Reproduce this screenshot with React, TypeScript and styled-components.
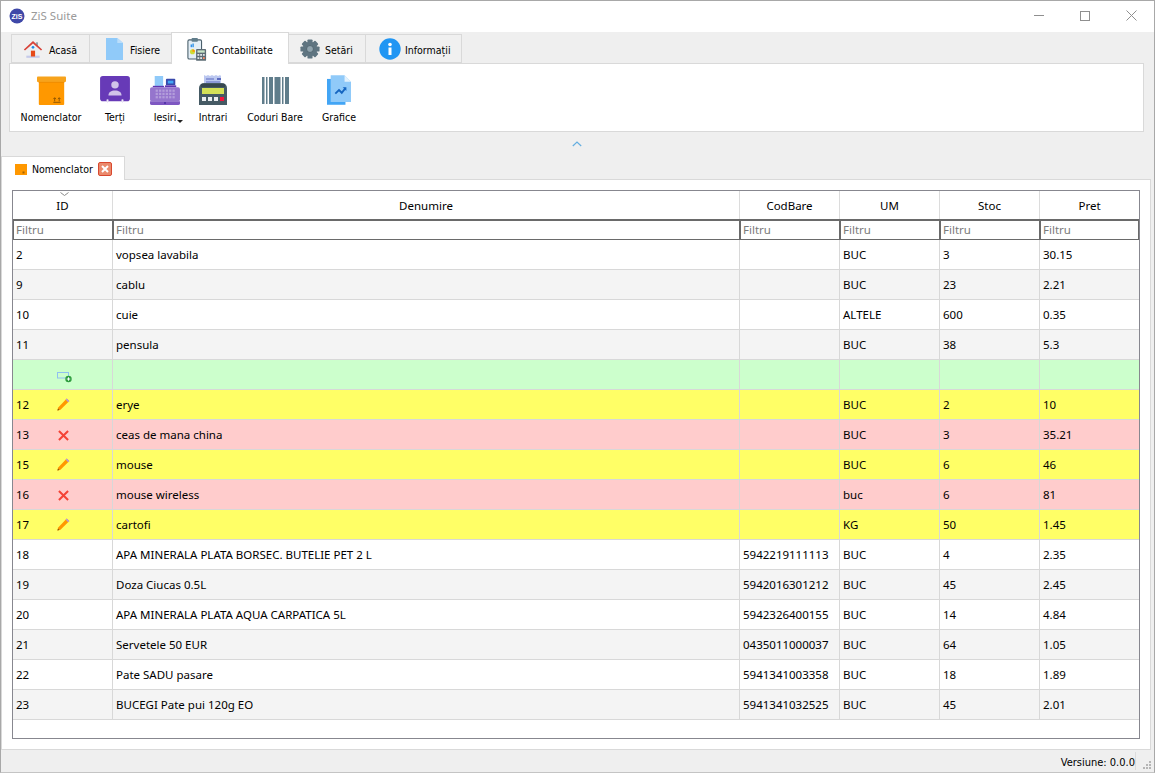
import React from "react";
import styled, { createGlobalStyle } from "styled-components";

const uiFont = `"DejaVu Sans Condensed", "DejaVu Sans", "Liberation Sans", sans-serif`;

const Global = createGlobalStyle`
  html, body { margin: 0; padding: 0; background: #efefef; }
  * { box-sizing: border-box; }
  body { font-family: "Noto Sans", "Open Sans", sans-serif; font-size: 11.5px; color: #000; }
`;

const Win = styled.div`
  width: 1155px; height: 773px; display: flex; flex-direction: column;
  background: #efefef; border: 1px solid #a8a8a8; border-bottom-color: #c4c4c4; overflow: hidden;
`;
const TitleBar = styled.div`
  height: 31px; flex: none; background: #fff; display: flex; align-items: center; padding: 0 0 2px 8px;
`;
const TitleText = styled.span`
  margin-left: 6px; color: #9a9a9a; font-size: 11.5px; flex: 1;
`;
const WinBtn = styled.div`
  width: 46px; height: 29px; display: flex; align-items: center; justify-content: center;
`;
const TabStrip = styled.div`
  display: flex; align-items: flex-end; height: 32px; flex: none; padding-left: 10px; position: relative; z-index: 1; margin-bottom: -1px;
  font-family: ${uiFont}; font-size: 10.5px;
`;
const Tab = styled.div<{ $w: number; $gap: number; $pad: number; $active?: boolean }>`
  width: ${p => p.$w}px; height: ${p => (p.$active ? 32 : 29)}px; display: flex; align-items: center; gap: ${p => p.$gap}px;
  padding-left: ${p => p.$pad}px; margin-bottom: ${p => (p.$active ? 0 : 1)}px;
  background: ${p => (p.$active ? "#fff" : "#f0f0f0")}; border: 1px solid #d9d9d9;
  border-bottom: ${p => (p.$active ? "none" : "1px solid #d9d9d9")}; margin-right: -1px; position: relative;
`;
const TabLabel = styled.span`
  padding-top: 3px; white-space: nowrap;
`;
const Ribbon = styled.div`
  height: 69px; flex: none; margin: 0 10px 0 8px; background: #fff; border: 1px solid #d9d9d9; display: flex; padding: 0 2px;
  font-family: ${uiFont}; font-size: 10.5px;
`;
const ToolBtn = styled.div<{ $w: number }>`
  width: ${p => p.$w}px; display: flex; flex-direction: column; align-items: center; padding-top: 11px;
`;
const ToolIconSlot = styled.div`
  height: 30px; display: flex; align-items: center; justify-content: center;
`;
const ToolLabel = styled.span`
  margin-top: 4px; line-height: 16px; white-space: nowrap; position: relative;
`;
const MenuCaret = styled.span`
  position: absolute; right: -7px; bottom: 2px; width: 0; height: 0;
  border-left: 3px solid transparent; border-right: 3px solid transparent; border-top: 3px solid #222;
`;
const Collapse = styled.div`
  height: 24px; flex: none; display: flex; justify-content: center; align-items: center; padding-right: 2px;
`;
const DocTabs = styled.div`
  height: 24px; flex: none; display: flex; position: relative; z-index: 1; margin-bottom: -1px;
  font-family: ${uiFont}; font-size: 10.5px;
`;
const DocTab = styled.div`
  width: 124px; height: 24px; background: #fff; border: 1px solid #d9d9d9; border-bottom: none;
  display: flex; align-items: center; padding: 1px 0 0 13px; gap: 5px;
`;
const DocPanel = styled.div`
  flex: 1; min-height: 0; margin: 0 3px 0 0; background: #fff; border: 1px solid #d9d9d9; padding: 10px 8px 10px 10px;
`;
const Table = styled.div`
  height: 549px; width: 1128px; border: 1px solid #87878f; display: flex; flex-direction: column;
`;
const cols = "100px 627px 100px 100px 100px 99px";
const HeadRow = styled.div`
  display: grid; grid-template-columns: ${cols}; height: 28px; flex: none;
`;
const HeadCell = styled.div`
  display: flex; align-items: center; justify-content: center; position: relative; border-right: 1px solid #dcdcdc; padding-top: 1px;
  &:last-child { border-right: none; }
`;
const SortMark = styled.svg`
  position: absolute; top: 1px; left: 47px;
`;
const FilterRow = styled.div`
  display: grid; grid-template-columns: ${cols}; height: 21px; flex: none;
`;
const Filter = styled.div`
  border: 1px solid #6a6a6a; border-top-width: 2px; color: #7b7b7b; display: flex; align-items: center; padding-left: 2px; line-height: 16px;
`;
const Row = styled.div<{ $bg: string }>`
  display: grid; grid-template-columns: ${cols}; height: 30px; flex: none; background: ${p => p.$bg}; border-bottom: 1px solid #d8d8d8;
`;
const Cell = styled.div`
  display: flex; align-items: center; padding-left: 3px; border-right: 1px solid #d8d8d8; position: relative; white-space: nowrap;
  &:last-child { border-right: none; }
`;
const RowIcon = styled.svg<{ $l: number; $t: number }>`
  position: absolute; left: ${p => p.$l}px; top: ${p => p.$t}px;
`;
const Status = styled.div`
  height: 22px; flex: none; display: flex; align-items: center; justify-content: flex-end; position: relative; padding: 0 18px 0 0;
  font-family: ${uiFont}; font-size: 11px;
`;
const StatusLabel = styled.span`
  padding: 2px 0 0; height: 18px; line-height: 18px; border-right: 1px solid #dcdcdc;
`;
const Grip = styled.svg`
  position: absolute; right: 1px; bottom: 1px;
`;

const ZisLogo = () => (
  <svg width="16" height="16" viewBox="0 0 16 16"><circle cx="8" cy="8" r="7.5" fill="#3f48a8" />
    <text x="8" y="10.5" textAnchor="middle" fontSize="7" fontWeight="700" fill="#fff" fontFamily="Liberation Sans, sans-serif">ZiS</text></svg>
);
const HomeIcon = () => (
  <svg width="20" height="20" viewBox="0 0 24 24">
    <path d="M5 11 12 5l7 6v9H5z" fill="#eceff1" />
    <rect x="4" y="20" width="16" height="2.6" fill="#c5cae9" />
    <rect x="15.5" y="4" width="2.5" height="4.5" fill="#90a4ae" />
    <path d="M1 12.5 12 2.5l11 10-1.4 1.4L12 5.4 2.4 13.9z" fill="#d84339" />
    <circle cx="12" cy="10" r="1.6" fill="#1e88e5" />
    <rect x="9.5" y="14" width="5" height="7" fill="#e64a19" />
  </svg>
);
const FileIcon = () => (
  <svg width="17" height="22" viewBox="0 0 18 26" preserveAspectRatio="none"><path d="M0 0h12l6 6v20H0z" fill="#90caf9" /><path d="M12 0l6 6h-6z" fill="#bbdefb" /></svg>
);
const AccountIcon = () => (
  <svg width="20" height="24" viewBox="0 0 22 26">
    <rect x="1" y="3" width="15" height="21" rx="1.5" fill="#e3eef6" stroke="#4a5f6b" strokeWidth="1.2" />
    <rect x="5" y="1" width="7" height="4" rx="1" fill="#607d8b" />
    <rect x="4" y="8" width="1.4" height="3" fill="#1e88e5" /><rect x="6" y="7" width="1.4" height="4" fill="#1e88e5" />
    <circle cx="6" cy="16" r="2.8" fill="#cddc39" /><path d="M6 16V13.2A2.8 2.8 0 0 1 8.8 16z" fill="#ff9800" />
    <rect x="10" y="13" width="11" height="13" rx="1" fill="#5d6c75" />
    <rect x="11.5" y="14.5" width="8" height="2.5" fill="#c8e6c9" />
    <g fill="#dfe5e8"><rect x="11.5" y="18.5" width="2" height="2" /><rect x="14.5" y="18.5" width="2" height="2" /><rect x="17.5" y="18.5" width="2" height="2" /><rect x="11.5" y="22" width="2" height="2" /><rect x="14.5" y="22" width="2" height="2" /></g>
    <rect x="17.5" y="22" width="2" height="2" fill="#ff8a65" />
  </svg>
);
const GearIcon = () => (
  <svg width="20" height="20" viewBox="0 0 22 22">
    <g fill="#5f7581">
      {[0, 45, 90, 135].map(a => <rect key={a} x="8.2" y="0.5" width="5.6" height="21" rx="1" transform={`rotate(${a} 11 11)`} />)}
      <circle cx="11" cy="11" r="8" />
    </g>
    <circle cx="11" cy="11" r="3.8" fill="#90a4ae" />
    <circle cx="11" cy="11" r="3.8" fill="none" stroke="#465a64" strokeWidth="0.8" />
  </svg>
);
const InfoIcon = () => (
  <svg width="22" height="22" viewBox="0 0 22 22"><circle cx="11" cy="11" r="10.7" fill="#2196f3" />
    <rect x="9.5" y="9.5" width="3" height="7.5" fill="#fff" /><circle cx="11" cy="6.5" r="1.8" fill="#fff" /></svg>
);
const BoxIcon = () => (
  <svg width="29" height="29" viewBox="0 0 32 32">
    <rect x="2" y="6" width="28" height="26" rx="1" fill="#ff9800" />
    <rect x="0" y="0.5" width="32" height="6" rx="1" fill="#f7a31c" /><rect x="2" y="6.5" width="28" height="1" fill="#ef8c00" />
    <path d="M19.5 24v4M18 25.5l1.5-1.5 1.5 1.5M24.5 24v4M23 25.5l1.5-1.5 1.5 1.5" stroke="#8a5200" strokeWidth="1" fill="none" />
    <rect x="18" y="28.5" width="8" height="1" fill="#8a5200" />
  </svg>
);
const DocBoxIcon = () => (
  <svg width="12" height="11" viewBox="0 0 12 11"><rect width="12" height="11" fill="#ff9800" /><rect x="7.5" y="7.5" width="2" height="2" fill="#a86400" /></svg>
);
const ContactIcon = () => (
  <svg width="30" height="28" viewBox="0 0 32 30">
    <rect x="0" y="0" width="32" height="27" rx="3" fill="#673ab7" />
    <circle cx="16" cy="9.5" r="4" fill="#d1c4e9" /><path d="M9 21c0-4 3-5.5 7-5.5s7 1.5 7 5.5z" fill="#d1c4e9" />
    <circle cx="8" cy="26" r="1.2" fill="#ede7f6" /><circle cx="24" cy="26" r="1.2" fill="#ede7f6" />
    <rect x="7.5" y="26" width="1" height="3" fill="#ede7f6" /><rect x="23.5" y="26" width="1" height="3" fill="#ede7f6" />
  </svg>
);
const RegisterIcon = () => (
  <svg width="30" height="29" viewBox="0 0 32 31">
    <rect x="5" y="0" width="9" height="12" fill="#90caf9" /><rect x="17" y="3" width="10" height="7" rx="1" fill="#3949ab" /><rect x="19" y="5" width="6" height="3" fill="#42a5f5" />
    <rect x="3" y="10.5" width="12" height="1.6" fill="#5e35b1" /><rect x="16" y="10" width="12" height="2" fill="#5e35b1" />
    <rect x="0" y="12" width="32" height="15" rx="2" fill="#9575cd" /><path d="M0 27h32v2a2 2 0 0 1-2 2H2a2 2 0 0 1-2-2z" fill="#7e57c2" />
    <g fill="#b39ddb">{[0, 1, 2, 3, 4, 5].map(i => [0, 1, 2].map(j => <rect key={`${i}${j}`} x={6 + i * 3.6} y={14.5 + j * 3.5} width="2.4" height="2.4" />))}</g>
    <circle cx="16" cy="28.8" r="1" fill="#4527a0" />
  </svg>
);
const PosIcon = () => (
  <svg width="28" height="30" viewBox="2 1 28 30">
    <path d="M7 1l2 1 2-1 2 1 2-1 2 1 2-1 2 1 2-1 1 1v9H7z" fill="#bcc8f0" />
    <path d="M9 5h8M9 8h14" stroke="#5c6bc0" strokeWidth="1.2" /><rect x="20" y="4" width="4" height="2" fill="#5c6bc0" />
    <path d="M2 14a5 5 0 0 1 5-5h18a5 5 0 0 1 5 5v17H2z" fill="#455a64" /><rect x="4" y="10" width="24" height="3" fill="#37474f" />
    <rect x="5" y="14" width="22" height="6" fill="#d4e157" />
    <g fill="#eceff1"><rect x="5" y="23" width="4" height="4" /><rect x="11" y="23" width="4" height="4" /><rect x="17" y="23" width="4" height="4" /></g>
    <rect x="23" y="23" width="4" height="4" fill="#f4143c" />
  </svg>
);
const BarcodeIcon = () => (
  <svg width="27" height="27" viewBox="0 0 27 27"><g fill="#607d8b">
    <rect x="0" y="0" width="2.5" height="27" /><rect x="4" y="0" width="1.5" height="27" /><rect x="7" y="0" width="4" height="27" /><rect x="12.5" y="0" width="6" height="27" /><rect x="20" y="0" width="1.5" height="27" /><rect x="23" y="0" width="4" height="27" />
  </g></svg>
);
const ChartFileIcon = () => (
  <svg width="24" height="30" viewBox="0 0 26 32">
    <path d="M0 4h20v28H0z" fill="#42a5f5" /><path d="M4 0h15l7 7v22H4z" fill="#90caf9" /><path d="M19 0l7 7h-7z" fill="#e3f2fd" />
    <path d="M9 20l4-4 3 3 4-5" stroke="#1565c0" strokeWidth="2" fill="none" /><path d="M17 13h4v4z" fill="#1565c0" />
  </svg>
);
const AddRowIcon = () => (
  <RowIcon $l={44} $t={12} width="15" height="11" viewBox="2 7 15 11">
    <rect x="2.5" y="7.5" width="11" height="5.5" fill="none" stroke="#90c0f0" />
    <circle cx="13.5" cy="14" r="3.2" fill="#2e9e3e" /><path d="M11.8 14h3.4M13.5 12.3v3.4" stroke="#fff" strokeWidth="1" />
  </RowIcon>
);
const EditIcon = () => (
  <RowIcon $l={44} $t={8} width="13" height="13" viewBox="1 1 16 16">
    <path d="M1.5 16.5l1-3.8L13 1.6l3.2 3.2L5.3 15.5z" fill="#ff9800" /><path d="M13 1.6l3.2 3.2-1.4 1.3-3.2-3.2z" fill="#b39ddb" /><path d="M1.5 16.5l.7-2.6 1.9 1.9z" fill="#8a5200" />
  </RowIcon>
);
const DeleteIcon = () => (
  <RowIcon $l={45} $t={10} width="11" height="11" viewBox="3 3 12 12">
    <path d="M4 4l10 10M14 4L4 14" stroke="#f44336" strokeWidth="2.2" />
  </RowIcon>
);

type R = { id?: string; name?: string; code?: string; um?: string; st?: string; pr?: string; kind?: "add" | "edit" | "del" };
const rows: R[] = [
  { id: "2", name: "vopsea lavabila", um: "BUC", st: "3", pr: "30.15" },
  { id: "9", name: "cablu", um: "BUC", st: "23", pr: "2.21" },
  { id: "10", name: "cuie", um: "ALTELE", st: "600", pr: "0.35" },
  { id: "11", name: "pensula", um: "BUC", st: "38", pr: "5.3" },
  { kind: "add" },
  { id: "12", name: "erye", um: "BUC", st: "2", pr: "10", kind: "edit" },
  { id: "13", name: "ceas de mana china", um: "BUC", st: "3", pr: "35.21", kind: "del" },
  { id: "15", name: "mouse", um: "BUC", st: "6", pr: "46", kind: "edit" },
  { id: "16", name: "mouse wireless", um: "buc", st: "6", pr: "81", kind: "del" },
  { id: "17", name: "cartofi", um: "KG", st: "50", pr: "1.45", kind: "edit" },
  { id: "18", name: "APA MINERALA PLATA BORSEC. BUTELIE PET 2 L", code: "5942219111113", um: "BUC", st: "4", pr: "2.35" },
  { id: "19", name: "Doza Ciucas 0.5L", code: "5942016301212", um: "BUC", st: "45", pr: "2.45" },
  { id: "20", name: "APA MINERALA PLATA AQUA CARPATICA 5L", code: "5942326400155", um: "BUC", st: "14", pr: "4.84" },
  { id: "21", name: "Servetele 50 EUR", code: "0435011000037", um: "BUC", st: "64", pr: "1.05" },
  { id: "22", name: "Pate SADU pasare", code: "5941341003358", um: "BUC", st: "18", pr: "1.89" },
  { id: "23", name: "BUCEGI Pate pui 120g EO", code: "5941341032525", um: "BUC", st: "45", pr: "2.01" },
];
const bgOf = (r: R, i: number) =>
  r.kind === "add" ? "#ccffcc" : r.kind === "edit" ? "#ffff66" : r.kind === "del" ? "#ffcccc" : i % 2 ? "#f4f4f4" : "#fff";
const headers = ["ID", "Denumire", "CodBare", "UM", "Stoc", "Pret"];
const tools: { label: string; w: number; icon: React.ReactNode; caret?: boolean }[] = [
  { label: "Nomenclator", w: 78, icon: <BoxIcon /> },
  { label: "Terți", w: 50, icon: <ContactIcon /> },
  { label: "Iesiri", w: 50, icon: <RegisterIcon />, caret: true },
  { label: "Intrari", w: 46, icon: <PosIcon /> },
  { label: "Coduri Bare", w: 78, icon: <BarcodeIcon /> },
  { label: "Grafice", w: 50, icon: <ChartFileIcon /> },
];

export default function App() {
  return (
    <Win>
      <Global />
      <TitleBar>
        <ZisLogo />
        <TitleText>ZiS Suite</TitleText>
        <WinBtn><svg width="10" height="1"><rect width="10" height="1" fill="#8f8f8f" /></svg></WinBtn>
        <WinBtn><svg width="10" height="10"><rect x="0.5" y="0.5" width="9" height="9" fill="none" stroke="#8f8f8f" /></svg></WinBtn>
        <WinBtn><svg width="11" height="11"><path d="M.5.5l10 10M10.5.5l-10 10" stroke="#8f8f8f" /></svg></WinBtn>
      </TitleBar>
      <TabStrip>
        <Tab $w={79} $pad={11} $gap={6}><HomeIcon /><TabLabel>Acasă</TabLabel></Tab>
        <Tab $w={83} $pad={16} $gap={7}><FileIcon /><TabLabel>Fisiere</TabLabel></Tab>
        <Tab $active $w={118} $pad={15} $gap={5}><AccountIcon /><TabLabel>Contabilitate</TabLabel></Tab>
        <Tab $w={78} $pad={11} $gap={5}><GearIcon /><TabLabel>Setări</TabLabel></Tab>
        <Tab $w={97} $pad={13} $gap={4}><InfoIcon /><TabLabel>Informații</TabLabel></Tab>
      </TabStrip>
      <Ribbon>
        {tools.map(t => (
          <ToolBtn key={t.label} $w={t.w}>
            <ToolIconSlot>{t.icon}</ToolIconSlot>
            <ToolLabel>{t.label}{t.caret && <MenuCaret />}</ToolLabel>
          </ToolBtn>
        ))}
      </Ribbon>
      <Collapse>
        <svg width="10" height="6" viewBox="0 0 10 6"><path d="M.8 5 5 1l4.2 4" fill="none" stroke="#64aee0" strokeWidth="1.2" /></svg>
      </Collapse>
      <DocTabs>
        <DocTab>
          <DocBoxIcon />
          Nomenclator
          <svg width="14" height="14" viewBox="0 0 14 14"><rect x=".5" y=".5" width="13" height="13" rx="1.5" fill="#ea8a6c" stroke="#d9482f" /><path d="M4 4l6 6M10 4l-6 6" stroke="#fff" strokeWidth="2" /></svg>
        </DocTab>
      </DocTabs>
      <DocPanel>
        <Table>
          <HeadRow>
            {headers.map((h, i) => (
              <HeadCell key={h}>
                {i === 0 && <SortMark width="9" height="4" viewBox="0 0 9 4"><path d="M.5.5l4 3 4-3" fill="none" stroke="#8a8a8a" /></SortMark>}
                {h}
              </HeadCell>
            ))}
          </HeadRow>
          <FilterRow>{headers.map(h => <Filter key={h}>Filtru</Filter>)}</FilterRow>
          {rows.map((r, i) => (
            <Row key={i} $bg={bgOf(r, i)}>
              <Cell>
                {r.id}
                {r.kind === "add" && <AddRowIcon />}
                {r.kind === "edit" && <EditIcon />}
                {r.kind === "del" && <DeleteIcon />}
              </Cell>
              <Cell>{r.name}</Cell>
              <Cell>{r.code}</Cell>
              <Cell>{r.um}</Cell>
              <Cell>{r.st}</Cell>
              <Cell>{r.pr}</Cell>
            </Row>
          ))}
        </Table>
      </DocPanel>
      <Status>
        <StatusLabel>Versiune: 0.0.0</StatusLabel>
        <Grip width="12" height="12" viewBox="0 0 12 12"><g fill="#b5b5b5"><rect x="8" y="2" width="2" height="2" /><rect x="5" y="5" width="2" height="2" /><rect x="8" y="5" width="2" height="2" /><rect x="2" y="8" width="2" height="2" /><rect x="5" y="8" width="2" height="2" /><rect x="8" y="8" width="2" height="2" /></g></Grip>
      </Status>
    </Win>
  );
}
